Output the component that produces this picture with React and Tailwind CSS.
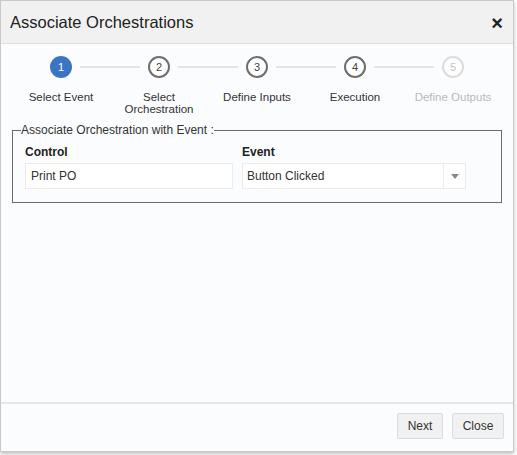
import React from "react";

const steps = [
  { n: 1, label: ["Select Event"], state: "active" },
  { n: 2, label: ["Select", "Orchestration"], state: "normal" },
  { n: 3, label: ["Define Inputs"], state: "normal" },
  { n: 4, label: ["Execution"], state: "normal" },
  { n: 5, label: ["Define Outputs"], state: "disabled" },
];

function Step({ s, i }) {
  const first = i === 0;
  const last = i === steps.length - 1;
  let circle =
    "w-[22px] h-[22px] rounded-full flex items-center justify-center text-[11px] shrink-0 ";
  if (s.state === "active") circle += "bg-[#3b74c5] text-white";
  else if (s.state === "normal") circle += "border-2 border-[#6e6e6e] text-[#444] bg-white";
  else circle += "border-2 border-[#dcdcdc] text-[#c4c4c4] bg-white";
  return (
    <div className="flex flex-col items-center w-[98px]">
      <div className="flex items-center w-full h-[22px]">
        <div className={"flex-1 h-[2px] mr-[8px] " + (first ? "" : "bg-[#e3e3e3]")} />
        <div className={circle}>{s.n}</div>
        <div className={"flex-1 h-[2px] ml-[8px] " + (last ? "" : "bg-[#e3e3e3]")} />
      </div>
      <div
        className={
          "mt-[13px] mb-[1px] text-[11.5px] leading-[12px] text-center " +
          (s.state === "disabled" ? "text-[#b9b9b9]" : "text-[#333]")
        }
      >
        {s.label.map((l) => (
          <div key={l}>{l}</div>
        ))}
      </div>
    </div>
  );
}

export default function App() {
  return (
    <div
      className="w-[517px] h-[455px] bg-white"
      style={{ fontFamily: '"Liberation Sans", Arial, sans-serif' }}
    >
      <div className="w-[514px] h-[452px] border border-[#c9c9c9] flex flex-col bg-[#fbfcfe] shadow-[0_2px_4px_rgba(0,0,0,0.25)]">
        <div className="h-[43px] shrink-0 bg-[#f1f1f1] border-b border-[#dedede] flex items-center justify-between pl-[9px] pr-[10px]">
          <div className="text-[16.5px] text-[#222] pt-[1px]">Associate Orchestrations</div>
          <div className="text-[20px] font-bold text-[#222] leading-none pt-[2px]">×</div>
        </div>
        <div className="flex-1 flex flex-col">
          <div className="flex pl-[11px] pt-[12px]">
            {steps.map((s, i) => (
              <Step key={s.n} s={s} i={i} />
            ))}
          </div>
          <fieldset className="mx-[11px] mt-[7px] border border-[#6a6a6a] px-[12px] pb-[13px] pt-[8px]">
            <legend className="text-[12px] text-[#333] -ml-[4px] px-0 leading-[14px]">
              Associate Orchestration with Event :
            </legend>
            <div className="flex gap-[9px]">
              <div className="w-[208px]">
                <div className="text-[12px] font-bold text-[#222] mb-[4px] leading-[14px]">Control</div>
                <div className="h-[26px] border border-[#ececec] bg-white flex items-center px-[5px] text-[12px] text-[#333]">
                  Print PO
                </div>
              </div>
              <div className="w-[224px]">
                <div className="text-[12px] font-bold text-[#222] mb-[4px] leading-[14px]">Event</div>
                <div className="h-[26px] border border-[#ececec] bg-white flex items-center text-[12px] text-[#333]">
                  <div className="flex-1 px-[4px]">Button Clicked</div>
                  <div className="w-[22px] h-full border-l border-[#ececec] flex items-center justify-center">
                    <svg width="8" height="5" viewBox="0 0 8 5">
                      <path d="M0 0 L8 0 L4 5 Z" fill="#888" />
                    </svg>
                  </div>
                </div>
              </div>
            </div>
          </fieldset>
        </div>
        <div className="h-[49px] shrink-0 border-t-2 border-[#e6e6e6] flex items-center justify-end gap-[9px] pr-[9px] pb-[4px]">
          <div className="h-[26px] w-[46px] rounded-[2px] border border-[#dcdcdc] bg-[#f1f1f1] flex items-center justify-center text-[12px] text-[#333]">
            Next
          </div>
          <div className="h-[26px] w-[52px] rounded-[2px] border border-[#dcdcdc] bg-[#f1f1f1] flex items-center justify-center text-[12px] text-[#333]">
            Close
          </div>
        </div>
      </div>
    </div>
  );
}
